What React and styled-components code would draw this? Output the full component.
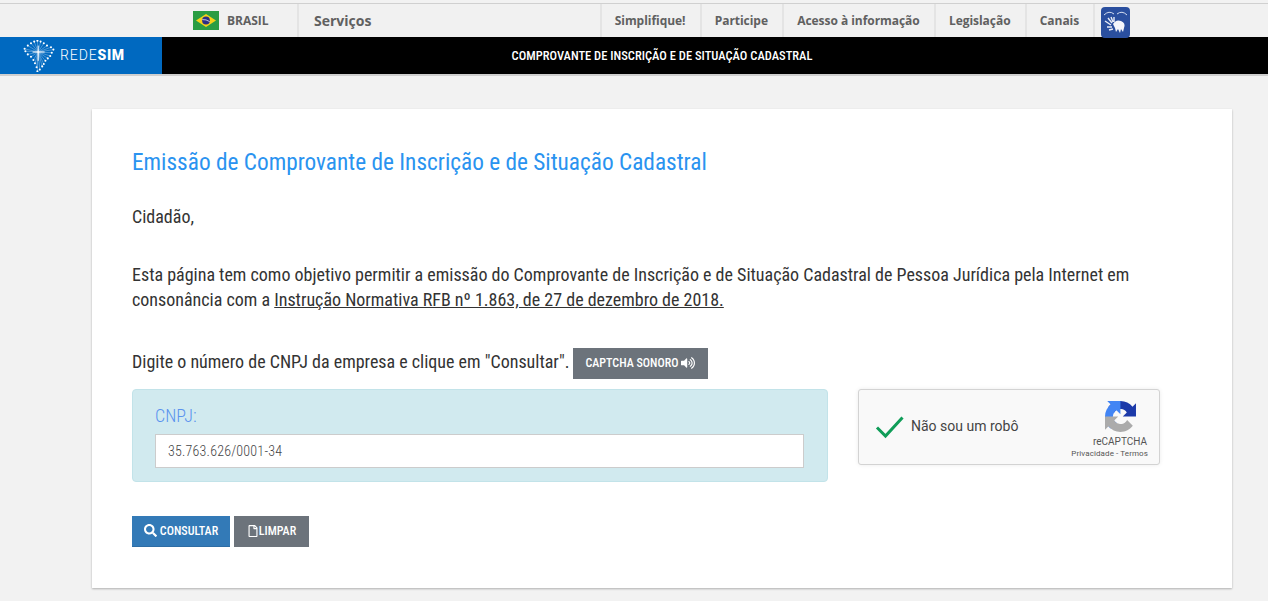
import React from "react";
import styled, { createGlobalStyle } from "styled-components";
import { FaSearch, FaRegFile, FaVolumeUp } from "react-icons/fa";

const Global = createGlobalStyle`
  html, body { margin: 0; padding: 0; background: #f2f2f2; overflow: hidden; }
  body { font-family: "Roboto Condensed", Roboto, "Liberation Sans", sans-serif; font-stretch: 75%; height: 601px; }
`;
const Page = styled.div`width: 1268px; height: 601px; overflow: hidden; background: #f2f2f2;`;
const TopBar = styled.div`
  height: 33px; margin-top: 3px; border-top: 1px solid #d0d0d0; background: #f1f1f1;
  display: flex; align-items: stretch; padding-left: 193px;
  font-family: "Open Sans", sans-serif; font-stretch: 100%; font-weight: 700; color: #606060;
`;
const Country = styled.div`display: flex; align-items: center; width: 104px; gap: 8px; font-size: 12px;`;
const Services = styled.div`
  display: flex; align-items: center; width: 285.5px; padding-left: 15px; font-size: 14px;
  border-left: 2px solid #e4e4e4;
`;
const NavItem = styled.div`
  display: flex; align-items: center; padding: 0 14px 0 13.2px; font-size: 12px; white-space: nowrap;
  border-left: 2px solid #e4e4e4; letter-spacing: -0.04px;
`;
const HandsBox = styled.div`
  border-left: 2px solid #e4e4e4; padding-left: 6px; display: flex; align-items: flex-start; padding-top: 3px;
`;
const BlackBar = styled.div`
  height: 37px; background: #000; display: flex; border-bottom: 2px solid #cfcfcf;
`;
const Brand = styled.div`
  width: 162px; background: #0069c0; display: flex; align-items: center; padding-left: 23px; gap: 5px; box-sizing: border-box;
`;
const BrandText = styled.span`
  color: #fff; font-family: Roboto, sans-serif; font-stretch: 100%; font-size: 14px; letter-spacing: 0.9px; font-weight: 300; margin-bottom: 2px;
  b { font-weight: 900; letter-spacing: 0.6px; }
`;
const BarTitle = styled.div`
  flex: 1; color: #fff; display: flex; align-items: center; justify-content: center; font-size: 12.5px;
  font-weight: 500; padding-right: 106px; white-space: nowrap;
`;
const Card = styled.main`
  margin: 33px 36px 0 92px; height: 479px; background: #fff; box-sizing: border-box;
  padding: 40px 40px 0; box-shadow: 0 1px 2px rgba(0,0,0,.28);
`;
const Title = styled.h1`
  margin: 0; font-weight: 400; font-size: 23.3px; line-height: 26px; color: #2a93f0; white-space: nowrap;
`;
const Para = styled.p`
  margin: ${p => p.$top}px 0 0; font-size: 18px; line-height: ${p => p.$line}px; color: #333; letter-spacing: -0.008px; white-space: nowrap;
  a { color: inherit; text-decoration: underline; }
`;
const PromptRow = styled.div`
  display: flex; align-items: center; margin-top: 35.5px; height: 31px;
  font-size: 18px; color: #333; letter-spacing: -0.008px; white-space: nowrap;
`;
const PromptText = styled.span`margin-bottom: 3px;`;
const SoundBtn = styled.button`
  margin-left: 3.5px; height: 31px; width: 135px; border: 0; background: #6c737b; color: #fff; padding: 0;
  font-family: inherit; font-stretch: inherit; font-weight: 500; font-size: 12px; display: flex; align-items: center; justify-content: center; gap: 3px;
`;
const FormRow = styled.div`display: flex; align-items: flex-start; margin-top: 10px;`;
const Well = styled.div`
  width: 696px; height: 93px; box-sizing: border-box; background: #d1eaef; border: 1px solid #c2e3e9; border-radius: 4px;
  padding: 16px 22px 0;
`;
const WellLabel = styled.div`font-size: 18px; line-height: 20px; font-weight: 300; color: #5b93ee;`;
const Input = styled.input`
  display: block; margin-top: 8px; width: 649px; height: 34px; box-sizing: border-box; border: 1px solid #ccc; background: #fff;
  padding: 0 12px; font-family: inherit; font-stretch: inherit; font-weight: 300; font-size: 14px; color: #444; letter-spacing: .2px; outline: none;
`;
const Captcha = styled.div`
  margin-left: 30px; width: 302px; height: 76px; box-sizing: border-box; background: #f9f9f9; border: 1px solid #d3d3d3; border-radius: 3px;
  box-shadow: 0 0 4px rgba(0,0,0,.08); display: flex; position: relative; align-items: center; padding-left: 16px;
  font-family: Roboto, sans-serif; font-stretch: 100%;
`;
const CaptchaText = styled.span`margin: 0 0 2px 6px; font-size: 14px; color: #444; font-weight: 400;`;
const CaptchaBrand = styled.div`
  position: absolute; right: 11px; top: 11px; display: flex; flex-direction: column; align-items: flex-end; color: #555;
`;
const CaptchaLogoSlot = styled.div`display: flex; margin-right: 12px; height: 31px;`;
const CaptchaName = styled.span`font-size: 10px; line-height: 12px; margin: 4px 1px 0 0;`;
const CaptchaLinks = styled.span`font-size: 8px; line-height: 12px; white-space: nowrap; font-stretch: 100%; letter-spacing: .1px;`;
const Actions = styled.div`display: flex; gap: 4px; margin-top: 34px;`;
const ActionBtn = styled.button`
  height: 31px; width: ${p => p.$w}px; border: 0; border-bottom: 1px solid ${p => p.$edge}; padding: 0; background: ${p => p.$bg}; color: #fff;
  font-family: inherit; font-stretch: inherit; font-weight: 500; font-size: 12px; display: flex; align-items: center; justify-content: center; gap: ${p => p.$gap}px;
`;

const Flag = () => (
  <svg width="26" height="19" viewBox="0 0 26 19">
    <rect width="26" height="19" fill="#2a9d43" />
    <path d="M13 3 L23 9.5 L13 16 L3 9.5Z" fill="#f4d21a" />
    <circle cx="13" cy="9.5" r="3.9" fill="#2c2f86" />
    <path d="M9.3 8.6 Q13 8.2 16.7 10.6" stroke="#fff" strokeWidth=".7" fill="none" />
  </svg>
);

const Hands = () => (
  <svg width="29" height="31" viewBox="0 0 29 31">
    <rect width="29" height="31" rx="4" fill="#2a4f9f" />
    <path d="M3 8 Q8 3 13 7 M16 7 Q21 3 26 8" stroke="#d5def0" strokeWidth="1" fill="none" />
    <path d="M12 17 Q15 12 20 14 Q25 16 23 21 L22 25 L20 22 L19 26 L17 22 L15 25 L14 21Z" fill="#f4f6fb" />
    <path d="M7 11 L11 16 M10 10 L12 15 M4 14 L10 18 M13 10 L13 15 M6 20 L11 20 M8 23 L12 22" stroke="#e8ecf6" strokeWidth="1.4" />
  </svg>
);

const dots = [[14,2],[18,1],[22,2],[26,4],[30,7],[35,9],[38,12],[36,16],[34,20],[31,23],[28,26],[26,30],[24,33],[21,37],[18,39],[17,34],[15,29],[13,25],[10,21],[6,18],[3,14],[2,11],[6,7],[10,4]];
const BrazilLogo = () => (
  <svg width="32" height="32" viewBox="0 0 40 40">
    {dots.map(([x, y], i) => <line key={"l" + i} x1="19" y1="15" x2={x} y2={y} stroke="#cfe4f7" strokeWidth=".6" opacity=".75" />)}
    {dots.map(([x, y], i) => <circle key={i} cx={x} cy={y} r="1.3" fill="#fff" />)}
    <path d="M19 7V26M12 15H27" stroke="#fff" strokeWidth="1.2" />
  </svg>
);

const Check = () => (
  <svg width="30" height="24" viewBox="0 0 30 24">
    <path d="M2 12.5 L10.5 21 L27.5 2.5" stroke="#0f9d58" strokeWidth="3" fill="none" />
  </svg>
);

const RecaptchaLogo = () => (
  <svg width="31" height="31" viewBox="0 0 64 64">
    <path d="M64 31.955l-.033-1.37V4.687l-7.16 7.16C50.948 4.674 42.033.093 32.05.093c-10.4 0-19.622 4.96-25.458 12.64l11.738 11.86a15.55 15.55 0 0 1 4.756-5.333c2.05-1.6 4.952-2.906 8.962-2.906.484 0 .858.057 1.133.163 4.972.392 9.28 3.136 11.82 7.118l-8.3 8.3 32.294.02" fill="#1c3aa9" />
    <path d="M31.862 0l-1.37.033H4.594l7.16 7.16C4.58 13.05 0 21.967 0 31.95c0 10.4 4.96 19.622 12.64 25.458l11.86-11.738a15.55 15.55 0 0 1-5.333-4.756c-1.6-2.05-2.906-4.952-2.906-8.962 0-.484.057-.858.163-1.133.392-4.972 3.136-9.28 7.118-11.82l8.3 8.3L31.862 0" fill="#4285f4" />
    <path d="M.001 31.955l.033 1.37v25.9l7.16-7.16c5.86 7.173 14.774 11.754 24.76 11.754 10.4 0 19.622-4.96 25.458-12.64l-11.738-11.86a15.55 15.55 0 0 1-4.756 5.333c-2.05 1.6-4.952 2.906-8.962 2.906-.484 0-.858-.057-1.133-.163-4.972-.392-9.28-3.136-11.82-7.118l8.3-8.3-32.294-.02" fill="#ababab" />
  </svg>
);

export default function App() {
  return (
    <Page>
      <Global />
      <TopBar>
        <Country><Flag />BRASIL</Country>
        <Services>Serviços</Services>
        <NavItem>Simplifique!</NavItem>
        <NavItem>Participe</NavItem>
        <NavItem>Acesso à informação</NavItem>
        <NavItem>Legislação</NavItem>
        <NavItem>Canais</NavItem>
        <HandsBox><Hands /></HandsBox>
      </TopBar>
      <BlackBar>
        <Brand><BrazilLogo /><BrandText>REDE<b>SIM</b></BrandText></Brand>
        <BarTitle>COMPROVANTE DE INSCRIÇÃO E DE SITUAÇÃO CADASTRAL</BarTitle>
      </BlackBar>
      <Card>
        <Title>Emissão de Comprovante de Inscrição e de Situação Cadastral</Title>
        <Para $top={29} $line={25.7}>Cidadão,</Para>
        <Para $top={32.5} $line={25}>Esta página tem como objetivo permitir a emissão do Comprovante de Inscrição e de Situação Cadastral de Pessoa Jurídica pela Internet em<br />consonância com a <a>Instrução Normativa RFB nº 1.863, de 27 de dezembro de 2018.</a></Para>
        <PromptRow>
          <PromptText>Digite o número de CNPJ da empresa e clique em "Consultar".</PromptText>
          <SoundBtn>CAPTCHA SONORO <FaVolumeUp size={14} /></SoundBtn>
        </PromptRow>
        <FormRow>
          <Well>
            <WellLabel>CNPJ:</WellLabel>
            <Input readOnly value="35.763.626/0001-34" />
          </Well>
          <Captcha>
            <Check />
            <CaptchaText>Não sou um robô</CaptchaText>
            <CaptchaBrand>
              <CaptchaLogoSlot><RecaptchaLogo /></CaptchaLogoSlot>
              <CaptchaName>reCAPTCHA</CaptchaName>
              <CaptchaLinks>Privacidade - Termos</CaptchaLinks>
            </CaptchaBrand>
          </Captcha>
        </FormRow>
        <Actions>
          <ActionBtn $w={98} $gap={3} $bg="#337ab7" $edge="#2e6da4"><FaSearch size={13} />CONSULTAR</ActionBtn>
          <ActionBtn $w={75} $gap={0} $bg="#6c737b" $edge="#6c737b"><FaRegFile size={12} />LIMPAR</ActionBtn>
        </Actions>
      </Card>
    </Page>
  );
}
